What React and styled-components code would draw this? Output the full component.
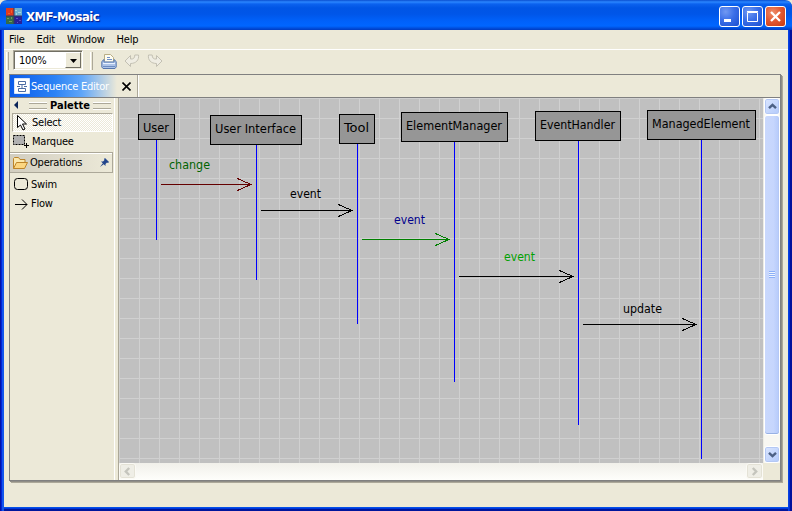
import React from "react";
import styled, { createGlobalStyle } from "styled-components";

const Global = createGlobalStyle`
  *{box-sizing:border-box}
  html,body{margin:0;background:#ece9d8;overflow:hidden}
  body{font:11px/13px "DejaVu Sans Condensed","DejaVu Sans",sans-serif;color:#000}
  svg{display:block;flex:none}
`;
const Label = styled.span`
  white-space:nowrap;letter-spacing:${p => p.$ls ?? -0.22}px;font-weight:${p => p.$bold ? 700 : 400};
  color:${p => p.$color || "inherit"};
`;
const Window = styled.div`
  width:792px;height:511px;display:flex;flex-direction:column;
  background:linear-gradient(90deg,#0013a8 0 1px,#0024d8 1px 2px,#1255ec 2px 4px,transparent 4px 788px,#0842e0 788px 789px,#0030d8 789px 790px,#00109c 790px),linear-gradient(#ece9d8 0 507px,#0550e8 507px 508px,#0038dc 508px 509px,#00159c 509px);
  border-radius:7px 7px 0 0;overflow:hidden;
`;
const TitleBar = styled.div`
  height:30px;flex:none;display:flex;align-items:center;padding:3px 6px 0 6px;gap:4px;
  background:linear-gradient(#0a4fd0 0,#2a86ff 2px,#0b62ef 4px,#0055e5 8px,#0056e8 14px,#0061fa 21px,#0066ff 26px,#0050df 28px,#003bc0 30px);
`;
const Title = styled.div`
  flex:1;color:#fff;font:bold 13px/16px "DejaVu Sans Condensed",sans-serif;letter-spacing:-.55px;text-shadow:1px 1px 1px #0a1883;padding-top:1px;
`;
const Buttons = styled.div`display:flex;gap:2px;`;
const WinButton = styled.div`
  width:21px;height:21px;border:1px solid #fff;border-radius:3px;
  background:${p => p.$close ? "radial-gradient(circle at 35% 30%,#ee8f6c 0,#e35a34 45%,#c83810 100%)" : "radial-gradient(circle at 30% 25%,#7199f2 0,#3b6fe8 45%,#1c4fd0 100%)"};
`;
const MenuBar = styled.div`
  height:20px;margin:0 4px;padding:3px 0 0 5px;display:flex;gap:12px;border-bottom:1px solid #fff;flex:none;
`;
const ToolBar = styled.div`height:24px;margin:0 4px;display:flex;flex:none;padding:0 0 0 2px;`;
const Grip = styled.div`width:3px;height:18px;margin-top:2px;border-right:1px solid #aca899;border-left:1px solid #fff;`;
const Combo = styled.div`
  width:70px;height:20px;margin:0 7px 0 4px;display:flex;background:#fff;padding:1px;
  border:1px solid;border-color:#aca899 #fff #fff #aca899;box-shadow:inset 1px 1px #716f64,inset -1px -1px #ece9d8;
  > span{flex:1;padding:2px 0 0 4px}
`;
const Drop = styled.div`
  width:16px;height:16px;background:#ece9d8;border:1px solid;border-color:#fff #716f64 #716f64 #fff;padding:6px 0 0 4px;
`;
const Tools = styled.div`display:flex;gap:7px;margin:3px 0 0 8px;`;
const Panel = styled.div`
  margin:0 0 0 9px;width:772px;height:407px;flex:none;border:1px solid #808080;
  box-shadow:1px 1px #8f8d86,2px 2px #aca899;display:flex;flex-direction:column;
`;
const TabStrip = styled.div`height:23px;flex:none;display:flex;border-bottom:1px solid #808080;`;
const Tab = styled.div`
  width:128px;display:flex;align-items:center;border-right:1px solid #aca899;box-shadow:1px 0 #fff;
  background:linear-gradient(90deg,#0a5bea 0,#2c83f5 45px,#60a6f8 72px,#ece9d8 107px);padding-left:4px;gap:1px;
  > svg:last-child{margin-left:auto;margin-right:6px}
`;
const Body = styled.div`flex:1;display:flex;`;
const Palette = styled.div`width:104px;display:flex;flex-direction:column;`;
const PaletteHead = styled.div`
  height:15px;display:flex;align-items:center;padding:0 3px 0 4px;gap:3px;
  > svg{margin:0 8px 2px 0}
`;
const Handle = styled.div`
  flex:1;height:7px;border:solid #aca899;border-width:1px 0;border-top-color:#fff;box-shadow:0 1px #fff,inset 0 1px #aca899;
`;
const Tool = styled.div`
  height:${p => p.$h || 18}px;margin:0 1px 0 2px;padding-left:${p => p.$pl ?? 2}px;display:flex;align-items:center;gap:${p => p.$gap ?? 3}px;
  border:1px solid;border-color:${p => p.$active ? "#aca899 #fff #fff #aca899" : "transparent"};
  background:${p => p.$active ? "repeating-conic-gradient(#fff 0 25%,#ece9d8 0 50%) 0 0/2px 2px" : "none"};
`;
const Drawer = styled.div`
  height:21px;margin:2px 1px 1px 0;display:flex;align-items:center;padding-left:2px;gap:2px;
  border:1px solid #aca899;border-left:0;background:linear-gradient(90deg,#d2cec0,#ece9d8);box-shadow:inset 0 1px #fff;
  > svg:last-child{margin-left:auto;margin-right:3px}
`;
const Sash = styled.div`width:5px;border-left:1px solid #fff;border-right:1px solid #aca899;`;
const View = styled.div`flex:1;display:grid;grid-template:365px 17px / 644px 17px;`;
const Canvas = styled.div`
  position:relative;
  background:linear-gradient(90deg,#d0d0d0 1px,transparent 1px) 0 0/20px 20px,linear-gradient(#d0d0d0 1px,transparent 1px) 0 0/20px 20px,#c0c0c0;
  > svg{position:absolute;inset:0}
`;
const VBar = styled.div`display:flex;flex-direction:column;background:#f8f7f2;border-left:1px solid #eeede5;`;
const HBar = styled.div`display:flex;justify-content:space-between;background:linear-gradient(#f1f0ea,#fefefb);`;
const BarButton = styled.div`
  width:${p => p.$off ? 17 : 16}px;height:${p => p.$off ? 16 : 17}px;flex:none;border:1px solid ${p => p.$off ? "#fbfaf5" : "#fff"};border-radius:3px;
  box-shadow:inset 0 0 0 1px ${p => p.$off ? "#e4e2d6" : "#b4c8f4"};
  background:${p => p.$off ? "#efeee6" : "linear-gradient(135deg,#dbe6ff,#b3cafb)"};
  display:flex;align-items:center;justify-content:center;
`;
const Thumb = styled.div`
  flex:none;height:320px;border:1px solid #fff;border-radius:3px;background:linear-gradient(90deg,#c9d8fc 0,#c6d6fd 60%,#b5cafa);
  box-shadow:inset 0 -1px #98b1e4,inset -1px 0 #b4c8f6;display:flex;align-items:center;justify-content:center;
`;
const Spacer = styled.div`flex:1`;

const nodes = [
  ["User", 138, 114, 37, 26, 143, 26, 156, 240],
  ["User Interface", 210, 115, 92, 30, 215, 81, 256, 280],
  ["Tool", 339, 114, 36, 30, 344, 25, 357, 324],
  ["ElementManager", 401, 112, 107, 30, 406, 96, 454, 382],
  ["EventHandler", 535, 111, 86, 30, 540, 75, 578, 425],
  ["ManagedElement", 647, 110, 109, 30, 652, 98, 701, 459],
];
const flows = [
  ["change", "#006400", 169, 169, 41, "#640000", 161, 252, 184],
  ["event", "#000", 290, 198, 31, "#000", 261, 353, 210],
  ["event", "#00008b", 394, 224, 31, "#008000", 362, 450, 239],
  ["event", "#00a000", 504, 261, 31, "#000", 459, 574, 276],
  ["update", "#000", 623, 313, 39, "#000", 583, 697, 324],
];

function Diagram() {
  return (
    <svg width="644" height="365" viewBox="119 98 644 365" fontFamily='"DejaVu Sans Condensed",sans-serif' fontSize="12.5">
      {nodes.map(([name, x, y, w, h, tx, tw, lx, end]) => (
        <g key={name}>
          <rect x={lx} y={y + h} width="1" height={end - y - h} fill="#00f" />
          <rect x={x + .5} y={y + .5} width={w - 1} height={h - 1} fill="#969696" stroke="#000" />
          <text x={tx} y={y + 18} textLength={tw} lengthAdjust="spacingAndGlyphs">{name}</text>
        </g>
      ))}
      {flows.map(([name, color, tx, ty, tw, stroke, x1, x2, y]) => (
        <g key={name + x1}>
          <text x={tx} y={ty} textLength={tw} lengthAdjust="spacingAndGlyphs" fill={color}>{name}</text>
          <path d={`M${x1} ${y + .5}H${x2 - .5}M${x2 - 15} ${y - 5.7}L${x2 - 1} ${y + .5}L${x2 - 15} ${y + 6.7}`} fill="none" stroke={stroke} shapeRendering="crispEdges" />
        </g>
      ))}
    </svg>
  );
}

const Chevron = ({ r = 0, color = "#4d6185" }) => (
  <svg width="9" height="9" viewBox="0 0 9 9"><path transform={`rotate(${r} 4.5 4.5)`} d="M1 6.2 4.5 2.8 8 6.2" fill="none" stroke={color} strokeWidth="2.4" /></svg>
);

const Logo = () => (
  <svg width="16" height="17" viewBox="0 0 16 17">
    <path fill="#e03a1c" d="M0 0h8v8H0z" /><path fill="#6cb0d0" d="M8 0h8v8H8z" /><path fill="#356b4a" d="M0 8h8v8H0z" /><path fill="#26209a" d="M8 8h8v8H8z" />
    <path d="M9 2h2v1H9zM12 4h3v1h-3zM10 5h1v2h-1z" fill="#a6d6de" /><path d="M1 10h2v1H1zM5 9h1v2H5zM3 13h3v1H3z" fill="#6f9d5e" /><path d="M10 10h2v1h-2zM13 12h2v1h-2zM11 14h1v1h-1z" fill="#5b54c8" />
    <path d="M2 5h2v1H2zM5 2h1v3H5z" fill="#f0602a" /><path d="M8 0v16M0 8h16" stroke="#303860" />
  </svg>
);
const Printer = () => (
  <svg width="16" height="16" viewBox="0 0 16 16">
    <path d="M3.500 8V1.500h6l3 3V8" fill="#fffdf0" stroke="#b8ad86" /><path d="M6 4.500h3M6 6.500h5" stroke="#6f8fca" />
    <path d="M3 6.500 .8 8.500V14l1.200 1.500h12l1.200-1.500V8.500L13 6.500V9H3z" fill="#adc4e8" stroke="#5576ad" /><path d="M2 10.500h12" stroke="#e8f1ff" /><path d="M2 13.500h12" stroke="#6d8cc0" />
  </svg>
);
const Arrow = ({ redo }) => (
  <svg width="16" height="16" viewBox="0 0 16 16">
    <path transform={redo ? "matrix(-1 0 0 1 16 0)" : undefined} d="M1 8 6.500 2.500V6C9.500 6.300 10.800 5 10.800 2h3.700c.8 5-2.500 8.500-8 8.500v3z" fill="#efede3" stroke="#c3c0b3" />
  </svg>
);

export default function App() {
  return (
    <>
      <Global />
      <Window>
        <TitleBar>
          <Logo />
          <Title>XMF-Mosaic</Title>
          <Buttons>
            <WinButton><svg width="19" height="19"><path d="M4 12h7v3H4z" fill="#fff" /></svg></WinButton>
            <WinButton><svg width="19" height="19"><path d="M4.500 5.500h10v9h-10zM4 4.500h11" fill="none" stroke="#fff" /></svg></WinButton>
            <WinButton $close><svg width="19" height="19"><path d="m5 5 9 9M14 5l-9 9" stroke="#fff" strokeWidth="2.3" /></svg></WinButton>
          </Buttons>
        </TitleBar>
        <MenuBar>
          <Label>File</Label><Label>Edit</Label><Label>Window</Label><Label>Help</Label>
        </MenuBar>
        <ToolBar>
          <Grip />
          <Combo><Label>100%</Label><Drop><svg width="7" height="4"><path d="M0 0h7L3.500 4z" /></svg></Drop></Combo>
          <Grip />
          <Tools><Printer /><Arrow /><Arrow redo /></Tools>
        </ToolBar>
        <Panel>
          <TabStrip>
            <Tab>
              <svg width="16" height="16" viewBox="0 0 16 16"><path d="M.5.5h15v15H.5z" fill="#fff" stroke="#d8e6fa" /><path d="M4.500 3.500h7v3h-7zM4.500 10.500h7v3h-7zM8 7v3M3 8.500h3M10 8.500h3" fill="none" stroke="#4c6ca4" /></svg>
              <Label $color="#fff">Sequence Editor</Label>
              <svg width="9" height="9"><path d="m.5.5 8 8M8.500.5l-8 8" stroke="#000" strokeWidth="1.600" /></svg>
            </Tab>
          </TabStrip>
          <Body>
            <Palette>
              <PaletteHead>
                <svg width="4" height="8"><path d="M4 0v8L0 4z" fill="#0a2458" /></svg>
                <Handle /><Label $bold $ls={0}>Palette</Label><Handle />
              </PaletteHead>
              <Tool $active $h={19} $pl={1} $gap={2}>
                <svg width="16" height="16" viewBox="0 0 16 16"><path d="M3.500.5v12l3-2.500 2.500 5 2-1-2.500-5h4z" fill="#fff" stroke="#000" /></svg>
                <Label>Select</Label>
              </Tool>
              <Tool $pl={0}>
                <svg width="16" height="16" viewBox="0 0 16 16"><path d="M.5 2.500h11v9H.5z" fill="#b0b0b0" stroke="#000" strokeDasharray="2 1" /><path d="M13.500 10v5M11 12.500h5" stroke="#000" /></svg>
                <Label>Marquee</Label>
              </Tool>
              <Drawer>
                <svg width="16" height="16" viewBox="0 0 16 16"><path d="M1.500 13.500v-10l1-1h4l1.500 2h5v3" fill="#fbe8ad" stroke="#bd8429" /><path d="m1.500 13.500 3-6h11l-3 6z" fill="#fcd680" stroke="#bd8429" /></svg>
                <Label>Operations</Label>
                <svg width="9" height="9"><path d="m5 0 4 4-1 1-1-.5L5.500 6v2L1 3.500h2L4.500 2 4 1zM0 9l3-4 1 1z" fill="#23468c" /></svg>
              </Drawer>
              <Tool $h={20} $pl={1}>
                <svg width="14" height="14"><rect x=".5" y="1.500" width="13" height="11" rx="3" fill="none" stroke="#000" /></svg><Label>Swim</Label>
              </Tool>
              <Tool $h={19} $pl={1}>
                <svg width="14" height="14"><path d="M1 7.500h12M8 2.500l5 5-5 5" fill="none" stroke="#000" /></svg><Label>Flow</Label>
              </Tool>
            </Palette>
            <Sash />
            <View>
              <Canvas><Diagram /></Canvas>
              <VBar>
                <BarButton><Chevron /></BarButton>
                <Thumb><svg width="7" height="8"><path d="M0 .5h6M0 2.500h6M0 4.500h6M0 6.500h6" stroke="#8cb0f8" /><path d="M0 1.500h6M0 3.500h6M0 5.500h6" stroke="#eef4fe" /></svg></Thumb>
                <Spacer /><BarButton><Chevron r={180} /></BarButton>
              </VBar>
              <HBar>
                <BarButton $off><Chevron r={-90} color="#c5c5bd" /></BarButton>
                <BarButton $off><Chevron r={90} color="#c5c5bd" /></BarButton>
              </HBar>
            </View>
          </Body>
        </Panel>
      </Window>
    </>
  );
}
